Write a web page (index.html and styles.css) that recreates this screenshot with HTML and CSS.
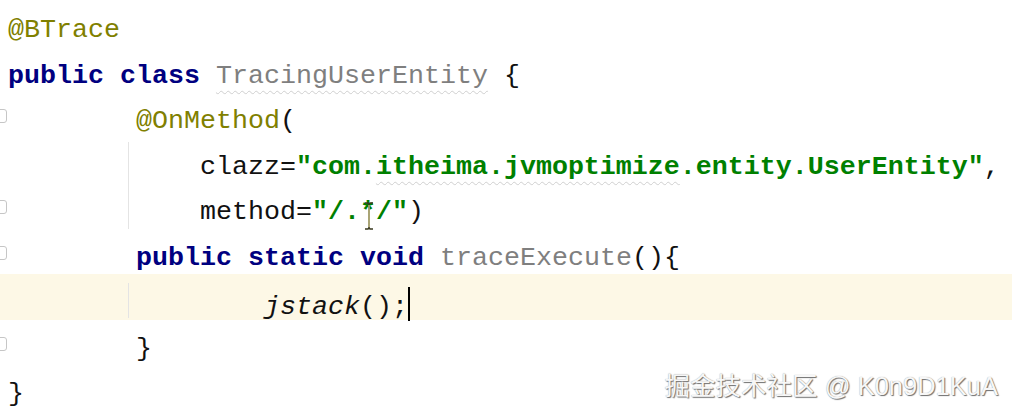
FILE: index.html
```html
<!DOCTYPE html>
<html lang="zh">
<head>
<meta charset="utf-8">
<title>TracingUserEntity</title>
<link rel="stylesheet" href="styles.css">
</head>
<body>
<div class="editor">
  <div class="line"><span class="gutter"></span><span class="code"><span class="ann">@BTrace</span></span></div>
  <div class="line"><span class="gutter"></span><span class="code"><span class="kw">public class</span> <span class="unused squiggle">TracingUserEntity</span> {</span></div>
  <div class="line"><span class="gutter"><span class="fold"></span></span><span class="code">        <span class="ann">@OnMethod</span>(</span></div>
  <div class="line guide guide-start"><span class="gutter"></span><span class="code">            clazz=<span class="str">"com.<span class="squiggle">itheima.jvmoptimize</span>.entity.UserEntity"</span>,</span></div>
  <div class="line guide"><span class="gutter"><span class="fold"></span></span><span class="code">            method=<span class="str">"/.<span class="star">*<svg class="ibeam" width="12" height="30" viewBox="0 0 12 30"><path d="M2 2h3l1 1 1-1h3M6 3v24M2 28h3l1-1 1 1h3" fill="none" stroke="#3a3a20" stroke-width="1.6"/><path d="M6 4v22" stroke="#f3e9a0" stroke-width="1"/></svg></span>/"</span>)</span></div>
  <div class="line"><span class="gutter"><span class="fold"></span></span><span class="code">        <span class="kw">public static void</span> <span class="unused">traceExecute</span>(){</span></div>
  <div class="line guide current"><span class="gutter"></span><span class="code">                <i class="call">jstack</i>();<span class="caret"></span></span></div>
  <div class="line"><span class="gutter"><span class="fold"></span></span><span class="code">        }</span></div>
  <div class="line"><span class="gutter"></span><span class="code">}</span></div>
</div>
<div class="watermark">掘金技术社区 @ K0n9D1KuA</div>
</body>
</html>
```
FILE: styles.css
```css
html, body {
  margin: 0;
  padding: 0;
  background: #ffffff;
}
body {
  width: 1012px;
  height: 418px;
  overflow: hidden;
  position: relative;
}
.editor {
  padding-top: 1px;
  font-family: "Liberation Mono", "DejaVu Sans Mono", monospace;
  font-size: 26.67px;
  color: #111111;
}
.line {
  position: relative;
  display: flex;
  align-items: flex-start;
  height: 45.5px;
  box-sizing: border-box;
  padding-top: 13px;
  line-height: 32.5px;
}
.line.current {
  background: #fdf8e6;
}
.line.guide::before {
  content: "";
  position: absolute;
  left: 128px;
  top: 0;
  bottom: 0;
  border-left: 1px solid #e4e4e4;
}
.line.guide-start::before {
  top: 4px;
}
.line.current::before {
  top: 9px;
  bottom: 2px;
}
.gutter {
  width: 8px;
  flex: none;
  overflow: visible;
}
.fold {
  display: block;
  width: 12px;
  height: 12px;
  margin-left: -7px;
  margin-top: 4px;
  border: 1.5px solid #c6c6c6;
  border-radius: 3px;
}
.code {
  white-space: pre;
}
.ann {
  color: #808000;
}
.kw {
  color: #000080;
  font-weight: bold;
}
.str {
  color: #008000;
  font-weight: bold;
}
.unused {
  color: #7f7f7f;
}
.squiggle {
  text-decoration-line: underline;
  text-decoration-style: wavy;
  text-decoration-color: #cfcfcf;
  text-decoration-thickness: 1px;
  text-underline-offset: 7px;
}
.call {
  font-style: italic;
}
.star {
  position: relative;
}
.ibeam {
  position: absolute;
  left: 3px;
  top: 4px;
}
.caret {
  display: inline-block;
  width: 2px;
  height: 34px;
  background: #000000;
  vertical-align: -7px;
}
.watermark {
  position: absolute;
  right: 14px;
  top: 371px;
  font-family: "Liberation Sans", "Noto Sans CJK SC", sans-serif;
  font-size: 25.5px;
  line-height: 30px;
  color: #f7f7f7;
  text-shadow: 1px 1px 1px #6e6e6e, 0 0 1px #9a9a9a;
}
```
